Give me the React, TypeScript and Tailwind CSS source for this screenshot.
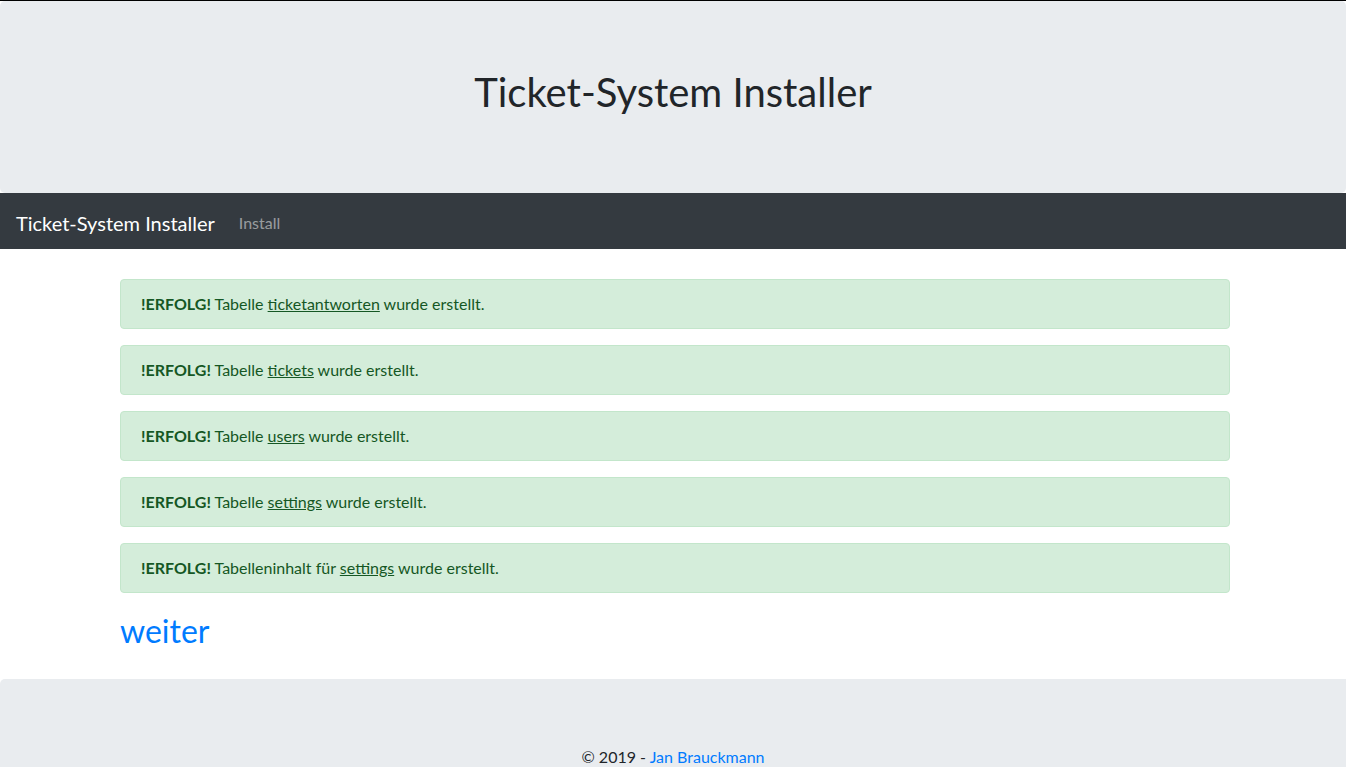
const alerts: { pre: string; table: string }[] = [
  { pre: "Tabelle", table: "ticketantworten" },
  { pre: "Tabelle", table: "tickets" },
  { pre: "Tabelle", table: "users" },
  { pre: "Tabelle", table: "settings" },
  { pre: "Tabelleninhalt für", table: "settings" },
];

function SuccessAlert({ pre, table }: { pre: string; table: string }) {
  return (
    <div className="rounded border border-[#c3e6cb] bg-[#d4edda] px-5 py-3 text-base leading-6 text-[#155724]">
      <strong className="font-bold">!ERFOLG!</strong> {pre}{" "}
      <u>{table}</u> wurde erstellt.
    </div>
  );
}

export default function App() {
  return (
    <div className="min-h-screen border-t border-black bg-white font-['Lato',sans-serif] text-[#212529]">
      <div className="flex h-[192px] items-center justify-center rounded-[5px] bg-[#e9ecef] pb-[10px]">
        <h1 className="text-[40px] leading-[1.2] font-normal">Ticket-System Installer</h1>
      </div>

      <nav className="flex h-[56px] items-center bg-[#343a40] px-4 pt-1">
        <span className="mr-4 text-[20px] leading-[30px] text-white">Ticket-System Installer</span>
        <a className="px-2 text-base text-white/50">Install</a>
      </nav>

      <main className="flex justify-center pt-[30px] pl-1">
        <div className="w-[1110px]">
          <div className="flex flex-col gap-4">
            {alerts.map((a, i) => (
              <SuccessAlert key={i} pre={a.pre} table={a.table} />
            ))}
          </div>
          <a className="mt-[19px] block text-[32px] leading-[1.2] text-[#007bff]">weiter</a>
        </div>
      </main>

      <footer className="mt-[29px] rounded-tl-[5px] bg-[#e9ecef] pt-[66px] pb-16 text-center text-base leading-6">
        © 2019 - <a className="text-[#007bff]">Jan Brauckmann</a>
      </footer>
    </div>
  );
}
